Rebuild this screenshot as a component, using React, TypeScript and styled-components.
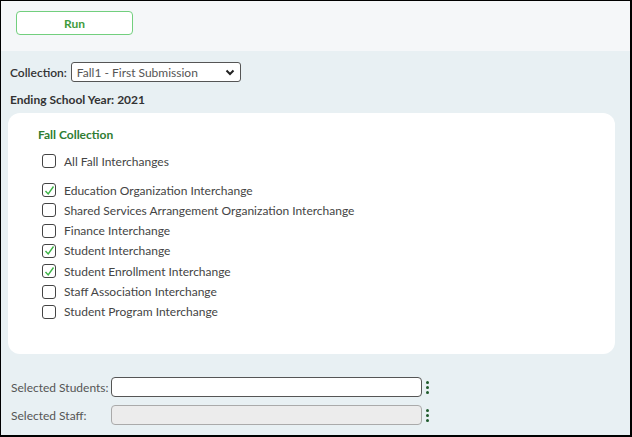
import styled, { createGlobalStyle } from "styled-components";

const GlobalStyle = createGlobalStyle`
    html, body {
        margin: 0;
        padding: 0;
    }
    body {
        font-family: Lato, "Noto Sans", sans-serif;
        font-size: 12px;
        color: #333;
    }
`;

const Frame = styled.div`
    width: 632px;
    height: 437px;
    box-sizing: border-box;
    border: 1px solid #000;
    border-right-width: 2px;
    border-bottom-width: 2px;
    display: flex;
    flex-direction: column;
    background: #e8f0f3;
    overflow: hidden;
`;

const Toolbar = styled.div`
    height: 50px;
    background: #f5f7f9;
    padding: 10px 0 0 15px;
    box-sizing: border-box;
`;

const RunButton = styled.button`
    width: 117px;
    height: 24px;
    border: 1.5px solid #72cf7e;
    border-radius: 4px;
    background: #fff;
    color: #3f9b3c;
    font-family: inherit;
    font-size: 12px;
    font-weight: 700;
    cursor: pointer;
`;

const Body = styled.div`
    padding: 11px 16px 0 7px;
    display: flex;
    flex-direction: column;
`;

const FieldRow = styled.div`
    display: flex;
    align-items: center;
    gap: 4px;
    height: 20px;
    padding-left: 2px;
`;

const Label = styled.span<{ bold?: boolean }>`
    font-weight: ${(p) => (p.bold ? 700 : 600)};
    color: #333;
`;

const Select = styled.div`
    width: 170px;
    height: 20px;
    box-sizing: border-box;
    border: 1px solid #555;
    border-radius: 3px;
    background: #fff;
    display: flex;
    align-items: center;
    justify-content: space-between;
    padding: 0 5px 0 5px;
    color: #555;
`;

const YearRow = styled.div`
    padding: 10px 0 0 2px;
    height: 20px;
    font-weight: 700;
    color: #333;
`;

const Card = styled.div`
    margin-top: 1px;
    width: 607px;
    height: 241px;
    box-sizing: border-box;
    background: #fff;
    border-radius: 12px;
    padding: 14px 0 0 30px;
`;

const CardTitle = styled.div`
    color: #2f7d32;
    font-weight: 700;
    height: 18px;
    margin-bottom: 9px;
`;

const CheckList = styled.div<{ gapAfter?: boolean }>`
    display: flex;
    flex-direction: column;
    gap: 6.33px;
    margin-bottom: ${(p) => (p.gapAfter ? "15px" : "0")};
`;

const CheckRow = styled.label`
    display: flex;
    align-items: center;
    gap: 8px;
    height: 14px;
    padding-left: 4px;
    color: #444;
`;

const Box = styled.span`
    width: 14px;
    height: 14px;
    box-sizing: border-box;
    border: 1.5px solid #444;
    border-radius: 3px;
    display: flex;
    align-items: center;
    justify-content: center;
`;

const SelectionArea = styled.div`
    padding: 23px 0 0 3px;
    display: flex;
    flex-direction: column;
    gap: 8px;
`;

const SelRow = styled.div`
    display: flex;
    align-items: center;
    height: 20px;
`;

const SelLabel = styled.span`
    width: 100px;
    color: #555;
`;

const TextBox = styled.div<{ disabled?: boolean }>`
    width: 311px;
    height: 20px;
    box-sizing: border-box;
    border: 1px solid ${(p) => (p.disabled ? "#aaa" : "#555")};
    border-radius: 4px;
    background: ${(p) => (p.disabled ? "#ececec" : "#fff")};
`;

const Dots = styled.span`
    margin-left: 4px;
    display: flex;
    flex-direction: column;
    gap: 2px;

    & i {
        width: 3px;
        height: 3px;
        border-radius: 50%;
        background: #1f5a2c;
    }
`;

const Check = () => (
    <svg width="11" height="11" viewBox="0 0 11 11">
        <path d="M1.5 6 L4.2 9 L9.5 1.5" fill="none" stroke="#3db346" strokeWidth="1.4" />
    </svg>
);

const Chevron = () => (
    <svg width="10" height="7" viewBox="0 0 10 7">
        <path d="M1.5 1.5 L5 5 L8.5 1.5" fill="none" stroke="#222" strokeWidth="2" />
    </svg>
);

const items: [string, boolean][] = [
    ["Education Organization Interchange", true],
    ["Shared Services Arrangement Organization Interchange", false],
    ["Finance Interchange", false],
    ["Student Interchange", true],
    ["Student Enrollment Interchange", true],
    ["Staff Association Interchange", false],
    ["Student Program Interchange", false],
];

const Item = ({ label, checked }: { label: string; checked: boolean }) => (
    <CheckRow>
        <Box>{checked && <Check />}</Box>
        {label}
    </CheckRow>
);

const Kebab = () => (
    <Dots>
        <i />
        <i />
        <i />
    </Dots>
);

export default function App() {
    return (
        <>
            <GlobalStyle />
            <Frame>
                <Toolbar>
                    <RunButton>Run</RunButton>
                </Toolbar>
                <Body>
                    <FieldRow>
                        <Label>Collection:</Label>
                        <Select>
                            Fall1 - First Submission
                            <Chevron />
                        </Select>
                    </FieldRow>
                    <YearRow>Ending School Year: 2021</YearRow>
                    <Card>
                        <CardTitle>Fall Collection</CardTitle>
                        <CheckList gapAfter>
                            <Item label="All Fall Interchanges" checked={false} />
                        </CheckList>
                        <CheckList>
                            {items.map(([label, checked]) => (
                                <Item key={label} label={label} checked={checked} />
                            ))}
                        </CheckList>
                    </Card>
                    <SelectionArea>
                        <SelRow>
                            <SelLabel>Selected Students:</SelLabel>
                            <TextBox />
                            <Kebab />
                        </SelRow>
                        <SelRow>
                            <SelLabel>Selected Staff:</SelLabel>
                            <TextBox disabled />
                            <Kebab />
                        </SelRow>
                    </SelectionArea>
                </Body>
            </Frame>
        </>
    );
}
